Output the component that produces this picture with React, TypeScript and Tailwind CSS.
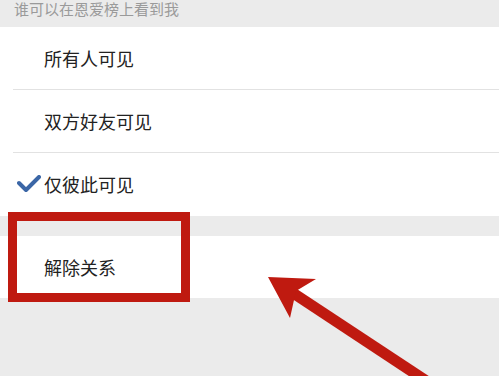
import React from 'react';

const options = ['所有人可见', '双方好友可见', '仅彼此可见'];

const Check = () => (
  <svg width="24" height="18" viewBox="0 0 24 18" className="absolute left-[17px] top-[22px]">
    <path d="M2 8 L9 15 L22 2" fill="none" stroke="#3b66a6" strokeWidth="4" strokeLinecap="round" strokeLinejoin="round" />
  </svg>
);

const App: React.FC = () => {
  return (
    <div
      className="relative w-[499px] h-[376px] overflow-hidden bg-[#ebebeb]"
      style={{ fontFamily: '"Noto Sans CJK SC", "Noto Sans", sans-serif' }}
    >
      {/* section title */}
      <div className="h-[27px] pl-[14px] flex items-end pb-[11px]">
        <span className="text-[15px] leading-[15px] text-[#9a9a9a]">谁可以在恩爱榜上看到我</span>
      </div>

      {/* visibility options */}
      <div className="bg-white">
        {options.map((label, i) => (
          <div key={label} className="relative pl-[13px]">
            {i === 2 && <Check />}
            <div
              className={
                'h-[63px] flex items-center pl-[31px] ' +
                (i < 2 ? 'border-b border-[#e2e2e2]' : '')
              }
            >
              <span className="text-[18px] text-[#222]">{label}</span>
            </div>
          </div>
        ))}
      </div>

      <div className="h-[20px]" />

      {/* unbind */}
      <div className="bg-white h-[62px] flex items-center pl-[44px]">
        <span className="text-[18px] text-[#222]">解除关系</span>
      </div>

      {/* red highlight box */}
      <div className="absolute left-[8px] top-[212px] w-[182px] h-[90px] border-[9px] border-[#bf1a10]" />

      {/* red arrow */}
      <svg className="absolute left-0 top-0" width="499" height="376" viewBox="0 0 499 376">
        <path d="M287 289 L440 390" stroke="#bf1a10" strokeWidth="11" fill="none" />
        <path d="M268 277 L316 279 L296 291 L290 318 Z" fill="#bf1a10" />
      </svg>
    </div>
  );
};

export default App;
